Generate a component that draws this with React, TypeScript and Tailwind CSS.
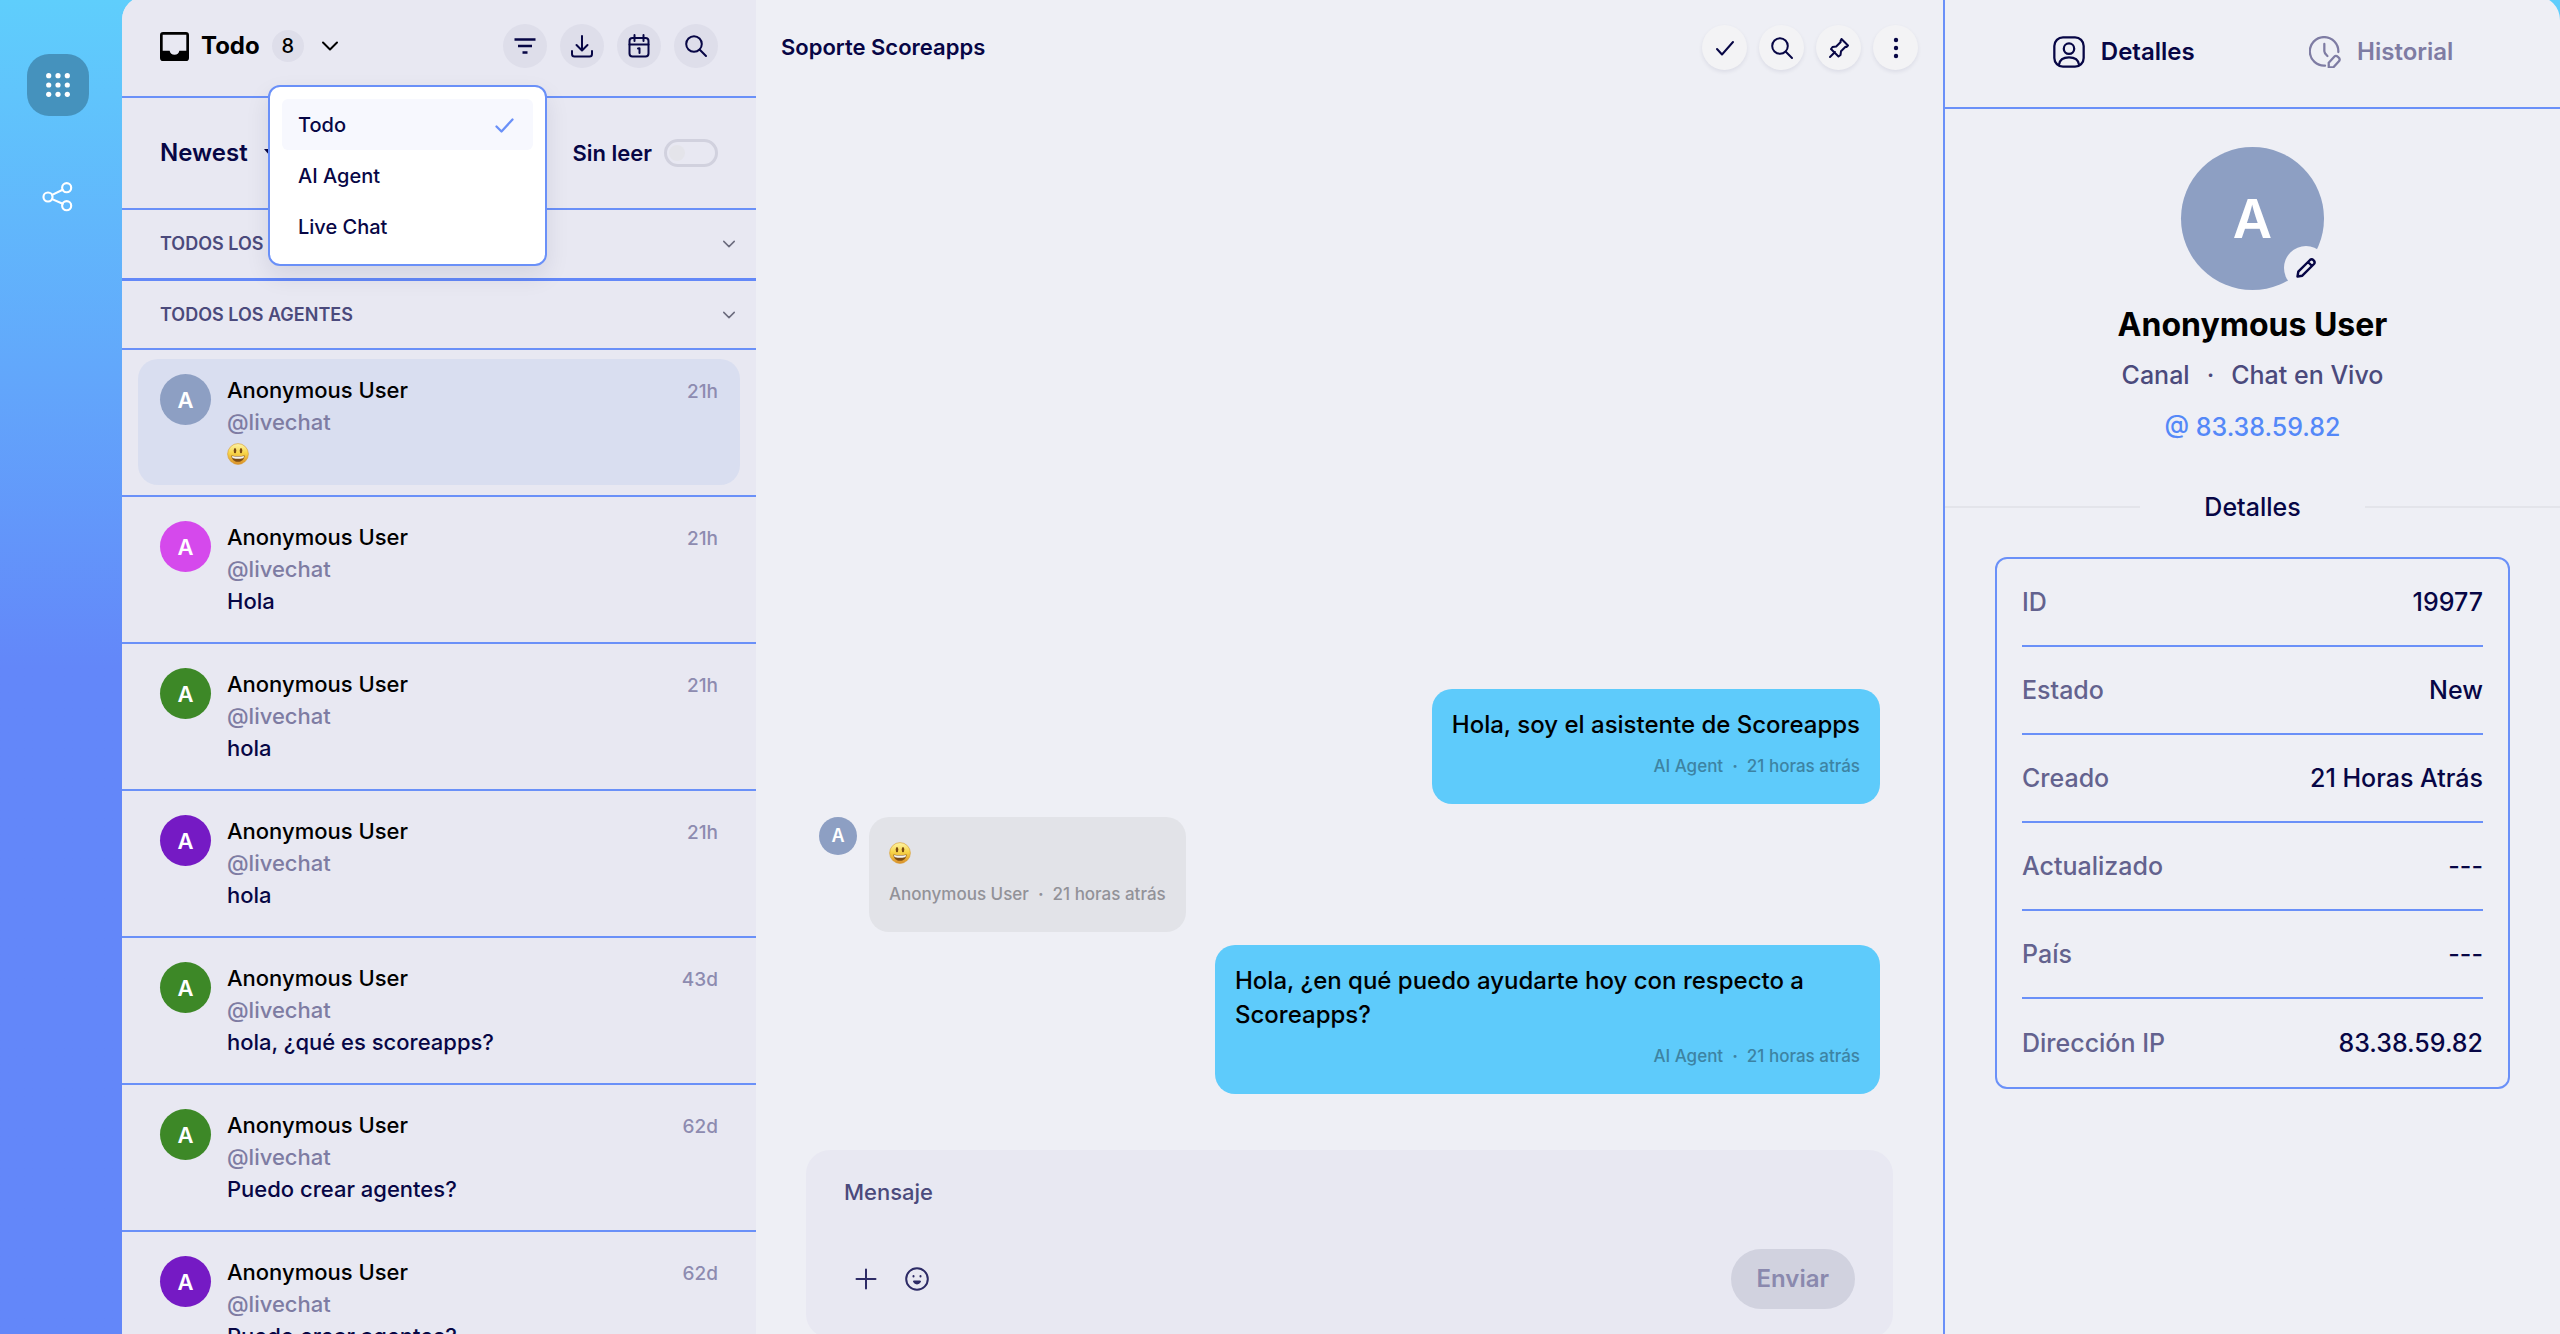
import React, { useState } from 'react';

interface Conversation {
  id: number;
  color: string;
  time: string;
  message: string;
}

interface Message {
  id: number;
  author: string;
  time: string;
  text: string;
  mine: boolean;
}

const conversations: Conversation[] = [
  { id: 1, color: 'bg-[#8d9fc3]', time: '21h', message: 'smile' },
  { id: 2, color: 'bg-[#d549ec]', time: '21h', message: 'Hola' },
  { id: 3, color: 'bg-[#3d8827]', time: '21h', message: 'hola' },
  { id: 4, color: 'bg-[#751ac4]', time: '21h', message: 'hola' },
  { id: 5, color: 'bg-[#3d8827]', time: '43d', message: 'hola, ¿qué es scoreapps?' },
  { id: 6, color: 'bg-[#3d8827]', time: '62d', message: 'Puedo crear agentes?' },
  { id: 7, color: 'bg-[#751ac4]', time: '62d', message: 'Puedo crear agentes?' },
];

const messages: Message[] = [
  { id: 1, author: 'AI Agent', time: '21 horas atrás', text: 'Hola, soy el asistente de Scoreapps', mine: true },
  { id: 2, author: 'Anonymous User', time: '21 horas atrás', text: 'smile', mine: false },
  { id: 3, author: 'AI Agent', time: '21 horas atrás', text: 'Hola, ¿en qué puedo ayudarte hoy con respecto a Scoreapps?', mine: true },
];

const details = [
  { label: 'ID', value: '19977' },
  { label: 'Estado', value: 'New' },
  { label: 'Creado', value: '21 Horas Atrás' },
  { label: 'Actualizado', value: '---' },
  { label: 'País', value: '---' },
  { label: 'Dirección IP', value: '83.38.59.82' },
];

const filters = ['Todo', 'AI Agent', 'Live Chat'];

const Icon = ({ className, width = 2, children }: { className?: string; width?: number; children: React.ReactNode }) => (
  <svg className={className} viewBox="0 0 24 24" fill="none" stroke="currentColor" strokeWidth={width} strokeLinecap="round" strokeLinejoin="round" aria-hidden="true">
    {children}
  </svg>
);

const SearchIcon = () => (
  <Icon className="size-6">
    <circle cx="10" cy="10" r="7.8" />
    <path d="M15.8 15.8 22 22" />
  </Icon>
);

const ChevronDown = ({ className }: { className: string }) => (
  <Icon className={className}>
    <path d="M5 8.5l7 7 7-7" />
  </Icon>
);

const Smile = () => (
  <svg className="size-[22px]" viewBox="0 0 22 22" role="img" aria-label="😃">
    <defs>
      <linearGradient id="face" x1="0" y1="0" x2="0" y2="1">
        <stop offset="0" stopColor="#fdf3a6" />
        <stop offset="0.45" stopColor="#f8d548" />
        <stop offset="1" stopColor="#d98f2b" />
      </linearGradient>
    </defs>
    <circle cx="11" cy="11" r="10.4" fill="url(#face)" stroke="#d99a2e" strokeWidth="0.6" />
    <ellipse cx="8" cy="7.6" rx="1.3" ry="2.7" fill="#7b4a12" />
    <ellipse cx="14" cy="7.6" rx="1.3" ry="2.7" fill="#7b4a12" />
    <path d="M4.4 12.4c4.2.9 9 .9 13.2 0-.3 4-3 6.3-6.6 6.3s-6.3-2.3-6.600-6.300z" fill="#7b4a12" />
    <path d="M5 12.9c4 .7 8 .7 12 0-.1 1.5-.6 2.2-1.3 2.4-3 .7-6.4.7-9.4 0-.7-.2-1.2-.9-1.3-2.4z" fill="#f5f5f0" />
  </svg>
);

const Rail = () => (
  <nav className="flex w-[122px] shrink-0 flex-col items-center gap-[50px] pt-[54px] pr-1.5 text-white">
    <button aria-label="Apps" className="flex size-[62px] items-center justify-center rounded-[22px] bg-[#4592bd]">
      <svg className="size-6" viewBox="0 0 24 24" fill="currentColor" aria-hidden="true">
        {[2.7, 12, 21.3].map(y => [2.7, 12, 21.3].map(x => <circle key={`${x}-${y}`} cx={x} cy={y} r="2.6" />))}
      </svg>
    </button>
    <button aria-label="Flows" className="flex size-[62px] items-center justify-center">
      <Icon className="size-8" width={1.6}>
        <circle cx="4.500" cy="12" r="3.4" />
        <circle cx="18.5" cy="5" r="3.4" />
        <circle cx="18.5" cy="18.5" r="3.4" />
        <path d="M7.600 10.400l7.900-3.800M7.600 13.600l7.900 3.500" />
      </Icon>
    </button>
  </nav>
);

const headerIcon = 'inline-flex size-11 items-center justify-center rounded-full bg-[#dedeea]';

const FilterMenu = ({ selected, onSelect }: { selected: string; onSelect: (f: string) => void }) => (
  <ul className="absolute top-[89px] left-[146px] z-10 w-[279px] rounded-xl border-2 border-[#6a90f8] bg-white p-3 shadow-[0_10px_24px_rgba(0,0,60,0.09)]">
    {filters.map(f => (
      <li key={f}>
        <button
          onClick={() => onSelect(f)}
          className={`flex h-[51px] w-full items-center justify-between rounded-md px-4 text-xl font-medium text-[#070645] ${f === selected ? 'bg-[#f7f8fe]' : ''}`}
        >
          {f}
          {f === selected && (
            <Icon className="size-6 text-[#6a90f8]" width={2.3}>
              <path d="M3.5 13.5l5 5 11-12" />
            </Icon>
          )}
        </button>
      </li>
    ))}
  </ul>
);

const ConversationRow = ({ item, active }: { item: Conversation; active: boolean }) => (
  <li className="h-[147px] border-b-2 border-[#6a90f8] px-4 pt-[9px]">
    <button className={`flex h-[126px] w-full items-start gap-4 rounded-[20px] px-[22px] pt-[15px] text-left text-[22px] leading-8 font-medium ${active ? 'bg-[#d9def0]' : ''}`}>
      <span className={`flex size-[51px] shrink-0 items-center justify-center rounded-full font-semibold text-white ${item.color}`}>A</span>
      <span className="flex-1">
        <span className="block text-black">Anonymous User</span>
        <span className="block text-[#7e7ca3]">@livechat</span>
        <span className="flex h-8 items-center text-[#070645]">{item.message === 'smile' ? <Smile /> : item.message}</span>
      </span>
      <span className="text-[19px] leading-[36px] text-[#8d8bb0]">{item.time}</span>
    </button>
  </li>
);

const Inbox = () => {
  const [selected, setSelected] = useState('Todo');

  return (
    <aside className="relative flex w-[634px] shrink-0 flex-col bg-[#e8e8f2] pt-1 text-[#070645]">
      <div className="flex h-[98px] shrink-0 items-center justify-between border-b-2 border-[#6a90f8] px-[38px] pb-1">
        <button className="flex h-11 items-center gap-3 text-2xl font-bold text-black">
          <svg className="size-[29px]" viewBox="0 0 28 28" aria-hidden="true">
            <path fillRule="evenodd" d="M3 0h22a3 3 0 0 1 3 3v22a3 3 0 0 1-3 3H3a3 3 0 0 1-3-3V3a3 3 0 0 1 3-3zM2.600 2.600v15.600h6.700a4.800 4.800 0 0 0 9.400 0h6.700V2.600z" />
          </svg>
          Todo
          <span className="flex h-8 min-w-8 items-center justify-center rounded-full bg-[#dedeea] text-xl font-medium">8</span>
          <ChevronDown className="ml-0.5 size-6" />
        </button>
        <div className="flex gap-[13px]">
          <button aria-label="Filtrar" className={headerIcon}>
            <Icon className="size-6" width={2.5}>
              <path strokeLinecap="butt" d="M1.5 5.500h21M5 12h14M9.500 18.500h5" />
            </Icon>
          </button>
          <button aria-label="Descargar" className={headerIcon}>
            <Icon className="size-6">
              <path d="M12 2v14M6.5 11l5.5 5.5 5.5-5.5M2 17v3a2.500 2.500 0 0 0 2.500 2.500h15A2.500 2.500 0 0 0 22 20v-3" />
            </Icon>
          </button>
          <button aria-label="Calendario" className={headerIcon}>
            <Icon className="size-6">
              <rect x="2.5" y="4" width="19" height="18.5" rx="3" />
              <path d="M7.5 1v6M16.5 1v6M2.5 10.5h19M11 14.500l1.500-.3v4.800" />
            </Icon>
          </button>
          <button aria-label="Buscar" className={headerIcon}><SearchIcon /></button>
        </div>
      </div>

      <div className="flex h-28 shrink-0 items-center justify-between border-b-2 border-[#6a90f8] px-[38px]">
        <button className="flex items-center gap-4 text-2xl font-semibold">
          Newest
          <svg className="h-2 w-3" viewBox="0 0 12 8" fill="currentColor" aria-hidden="true"><path d="M0 0h12L6 7z" /></svg>
        </button>
        <label className="flex items-center gap-3 text-[22px] font-semibold">
          Sin leer
          <input type="checkbox" className="flex h-7 w-[54px] appearance-none items-center rounded-full border-[3px] border-[#d1d1de] px-0.5 before:size-4 before:rounded-full before:bg-[#e4e4ea]" />
        </label>
      </div>

      <button className="flex h-[71px] shrink-0 items-center justify-between border-b-[3px] border-[#6388f8] pr-[18px] pl-[38px] text-lg font-semibold text-[#4b4a7c]">
        TODOS LOS CANALES
        <ChevronDown className="size-[18px] text-[#6b6b7d]" />
      </button>
      <button className="flex h-[69px] shrink-0 items-center justify-between border-b-2 border-[#6a90f8] pr-[18px] pl-[38px] text-lg font-semibold text-[#4b4a7c]">
        TODOS LOS AGENTES
        <ChevronDown className="size-[18px] text-[#6b6b7d]" />
      </button>

      <ul className="min-h-0 flex-1 overflow-hidden">
        {conversations.map((c, i) => <ConversationRow key={c.id} item={c} active={i === 0} />)}
      </ul>

      <FilterMenu selected={selected} onSelect={setSelected} />
    </aside>
  );
};

const Bubble = ({ msg }: { msg: Message }) => (
  <li className={`flex items-start gap-3 ${msg.mine ? 'justify-end' : ''}`}>
    {!msg.mine && (
      <span className="flex size-[38px] items-center justify-center rounded-full bg-[#8d9fc3] text-lg font-semibold text-white">A</span>
    )}
    <div className={`max-w-[665px] rounded-[20px] px-5 pt-[19px] pb-[26px] font-medium ${msg.mine ? 'bg-[#5ecbfb] text-black' : 'bg-[#e2e3e8]'}`}>
      <p className="flex min-h-[34px] items-center text-2xl leading-[34px]">{msg.text === 'smile' ? <Smile /> : msg.text}</p>
      <p className={`mt-3 text-[17px] leading-6 ${msg.mine ? 'text-right text-[#3d83a3]' : 'text-[#929298]'}`}>
        {msg.author}<span className="mx-[9px] font-bold">·</span>{msg.time}
      </p>
    </div>
  </li>
);

const chatIcon = 'flex size-[45px] items-center justify-center rounded-full bg-[#f3f3f5] shadow-[0_2px_4px_rgba(0,0,60,0.08)]';

const Chat = () => (
  <main className="flex min-w-0 flex-1 flex-col px-[25px] pt-1 text-[#070645]">
    <header className="flex h-[95px] items-center justify-between">
      <h1 className="text-[22px] font-semibold">Soporte Scoreapps</h1>
      <div className="flex gap-3">
        <button aria-label="Resolver" className={chatIcon}>
          <Icon className="size-6"><path d="M4 13l5 5.5L20 6" /></Icon>
        </button>
        <button aria-label="Buscar" className={chatIcon}><SearchIcon /></button>
        <button aria-label="Fijar" className={chatIcon}>
          <Icon className="size-6">
            <path d="M14.5 3l6.5 6.5-1.5 1.5-1-.2-4.5 4.5-.5 3.7-2 1.5L4 13l1.500-2 3.700-.5L13.700 6l-.2-1zM8 16l-5 5" />
          </Icon>
        </button>
        <button aria-label="Más opciones" className={chatIcon}>
          <svg className="size-6" viewBox="0 0 24 24" fill="currentColor" aria-hidden="true">
            <circle cx="12" cy="4" r="2.2" /><circle cx="12" cy="12" r="2.2" /><circle cx="12" cy="20" r="2.2" />
          </svg>
        </button>
      </div>
    </header>

    <ul className="flex min-h-0 flex-1 flex-col justify-end gap-[13px] px-[38px] pb-14">
      {messages.map(m => <Bubble key={m.id} msg={m} />)}
    </ul>

    <form className="mx-[25px] flex h-[188px] shrink-0 flex-col justify-between rounded-3xl bg-[#e8e8f2] px-[38px] pt-6 pb-[29px]" onSubmit={e => e.preventDefault()}>
      <textarea aria-label="Mensaje" placeholder="Mensaje" rows={1} className="resize-none bg-transparent text-[22px] leading-9 font-medium outline-none placeholder:text-[#4b4a7c]" />
      <div className="flex items-center justify-between">
        <div className="flex gap-[27px] pl-2.5 text-[#2d2b66]">
          <button type="button" aria-label="Adjuntar">
            <Icon className="size-6"><path d="M12 2.5v19M2.5 12h19" /></Icon>
          </button>
          <button type="button" aria-label="Emoji">
            <Icon className="size-6">
              <circle cx="12" cy="12" r="10.8" />
              <path d="M8.5 9v.6M15.5 9v.6" />
              <path d="M9 14.600c1.500 2.600 4.500 2.600 6 0z" fill="currentColor" />
            </Icon>
          </button>
        </div>
        <button className="h-[60px] rounded-full bg-[#d1d2df] px-[26px] text-2xl font-semibold text-[#8a89ae]">Enviar</button>
      </div>
    </form>
  </main>
);

const DetailsPanel = () => (
  <aside className="flex w-[617px] shrink-0 flex-col border-l-2 border-[#6a90f8] pt-1 text-[#070645]">
    <div role="tablist" className="flex h-[109px] shrink-0 items-center border-b-2 border-[#6a90f8] px-[50px] pb-[3px] text-2xl font-semibold">
      <button role="tab" aria-selected="true" className="flex flex-1 items-center justify-center gap-4">
        <Icon className="size-8" width={1.7}>
          <rect x="1" y="1" width="22" height="22" rx="6.5" />
          <circle cx="12" cy="9.5" r="3.9" />
          <path d="M4.5 21.5c.5-3.6 3-5.5 7.5-5.500s7 1.900 7.500 5.500" />
        </Icon>
        Detalles
      </button>
      <button role="tab" aria-selected="false" className="flex flex-1 items-center justify-center gap-4 text-[#7e7ca3]">
        <Icon className="size-8" width={1.7}>
          <path d="M22 12A10.700 10.700 0 1 0 12 22.200M11.500 6v5.500c0 1.500 1.200 2.500 2.300 3.500" />
          <path d="M14.800 23.500v-3.500l4.300-4.600c1.300-1.300 5 1.200 3.500 3.400l-4.300 4.700z" />
        </Icon>
        Historial
      </button>
    </div>

    <div className="flex flex-col items-center pt-[38px]">
      <div className="relative flex size-[143px] items-center justify-center rounded-full bg-[#8d9fc3] text-[54px] leading-none font-semibold text-white">
        A
        <button aria-label="Editar" className="absolute -right-1 bottom-0 flex size-11 items-center justify-center rounded-full bg-[#eeeff5] text-[#070645]">
          <Icon className="size-6" width={2.4}>
            <path d="M3.500 20.500l.8-4.800L16 4c2.300-2 6 1.500 4 4L8.300 19.700zM14 6l4 4" />
          </Icon>
        </button>
      </div>
      <h2 className="mt-[15px] text-[32px] leading-[40px] font-bold text-black">Anonymous User</h2>
      <p className="mt-[11px] text-[25px] leading-[38px] font-medium text-[#4b4a7c]">Canal<span className="mx-[17px]">·</span>Chat en Vivo</p>
      <p className="mt-3.5 text-[25px] leading-[38px] font-medium text-[#5488f8]">@ 83.38.59.82</p>
    </div>

    <div className="mt-[43px] flex items-center gap-16 text-[25px] leading-9 font-medium">
      <span className="h-0.5 flex-1 bg-[#e3e4ea]" />
      <h3>Detalles</h3>
      <span className="h-0.5 flex-1 bg-[#e3e4ea]" />
    </div>

    <dl className="mx-[50px] mt-8 rounded-xl border-2 border-[#6a90f8] px-[25px] text-[25px] font-medium">
      {details.map(d => (
        <div key={d.label} className="flex h-[88px] items-center justify-between border-b-2 border-[#6a90f8] pt-0.5 last:border-b-0">
          <dt className="text-[#63628e]">{d.label}</dt>
          <dd>{d.value}</dd>
        </div>
      ))}
    </dl>
  </aside>
);

const App: React.FC = () => (
  <div className="flex h-screen overflow-hidden bg-linear-to-b from-[#5fcefc] to-[#6387f9] to-50% font-['Inter',sans-serif]">
    <Rail />
    <div className="-my-1 flex min-w-0 flex-1 overflow-hidden rounded-t-3xl bg-[#eeeff5]">
      <Inbox />
      <Chat />
      <DetailsPanel />
    </div>
  </div>
);

export default App;
